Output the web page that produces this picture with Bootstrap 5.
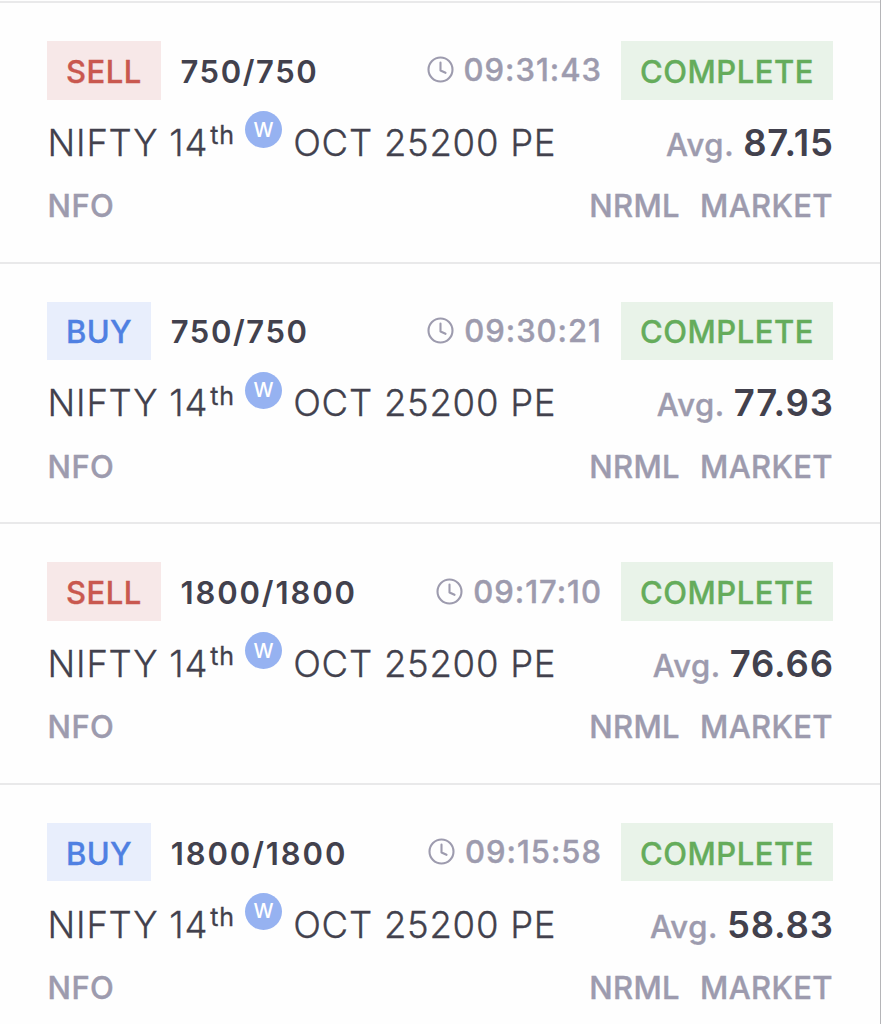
<!DOCTYPE html>
<html lang="en">
<head>
<meta charset="utf-8">
<meta name="viewport" content="width=device-width, initial-scale=1">
<title>Orders</title>
<link href="https://cdn.jsdelivr.net/npm/bootstrap@5.3.0/dist/css/bootstrap.min.css" rel="stylesheet">
<style>
body{font-family:Inter,"Liberation Sans",sans-serif;color:#42414d;background:#fefefe;font-size:31px;line-height:1;overflow:hidden}
.orders{height:1024px;padding-top:1px;border-right:1px solid #b5b5b8;overflow:hidden}
.order{height:260.67px;border-top:2px solid #e9e9ea;padding:38px 47px 0}
.line-top{height:58.5px}
.line-name{height:50px;margin-top:18.5px}
.line-meta{height:40px;margin-top:17.5px;padding-left:.6px;letter-spacing:.35px}
.tag{height:58.5px;padding:2px 19px 0;font-weight:500;-webkit-text-stroke:.35px currentColor}
.tag-sell{background:#f7e8e8;color:#c9584f;letter-spacing:.5px}
.tag-buy{background:#e8eefc;color:#4f80e2;letter-spacing:.4px}
.tag-done{background:#e9f3e9;color:#65ac5b;letter-spacing:.52px}
.qty{font-weight:600;letter-spacing:1.6px;margin-left:19.6px;padding-top:2px}
.qty-long{letter-spacing:1.9px}
.muted{color:#9d9bae;font-weight:500;-webkit-text-stroke:.4px currentColor}
.time{margin-right:19px;letter-spacing:1px;margin-top:-1px}
.time svg{width:27px;height:27px;margin-right:10px}
.sym{font-size:36.5px;font-weight:300;letter-spacing:.75px;white-space:pre;-webkit-text-stroke:.3px currentColor}
.sym:first-child{margin-left:.6px}
.ord{font-size:25px;font-weight:400;letter-spacing:1px;margin:-15px 0 0 2px;-webkit-text-stroke:.3px currentColor}
.week{width:37px;height:37px;background:#96b2f1;color:#fff;font-size:20px;font-weight:500;margin:-27px 11px 0 10px}
.avg{letter-spacing:.6px}
.price{font-size:36.5px;font-weight:600;margin:0 -.8px 0 9px;letter-spacing:.8px;color:#42414d;-webkit-text-stroke:0}
.kind{margin-left:20px;letter-spacing:.4px}
</style>
</head>
<body>
<main class="orders">
<section class="order">
<div class="line-top d-flex align-items-center"><span class="tag tag-sell d-flex align-items-center">SELL</span><span class="qty">750/750</span><span class="time muted d-flex align-items-center ms-auto"><svg viewBox="0 0 27 27" fill="none" stroke="currentColor" stroke-width="2.1"><circle cx="13.5" cy="13.5" r="12"/><path d="M13.5 6.5v8l5 2.3" stroke-linecap="round" stroke-linejoin="round"/></svg>09:31:43</span><span class="tag tag-done d-flex align-items-center">COMPLETE</span></div>
<div class="line-name d-flex align-items-center"><span class="sym">NIFTY 14</span><span class="ord">th</span><span class="week rounded-circle d-flex align-items-center justify-content-center">W</span><span class="sym">OCT 25200 PE</span><span class="avg ms-auto d-flex align-items-baseline muted">Avg.<b class="price">87.15</b></span></div>
<div class="line-meta d-flex align-items-center muted"><span>NFO</span><span class="ms-auto">NRML</span><span class="kind">MARKET</span></div>
</section>
<section class="order">
<div class="line-top d-flex align-items-center"><span class="tag tag-buy d-flex align-items-center">BUY</span><span class="qty">750/750</span><span class="time muted d-flex align-items-center ms-auto"><svg viewBox="0 0 27 27" fill="none" stroke="currentColor" stroke-width="2.1"><circle cx="13.5" cy="13.5" r="12"/><path d="M13.5 6.5v8l5 2.3" stroke-linecap="round" stroke-linejoin="round"/></svg>09:30:21</span><span class="tag tag-done d-flex align-items-center">COMPLETE</span></div>
<div class="line-name d-flex align-items-center"><span class="sym">NIFTY 14</span><span class="ord">th</span><span class="week rounded-circle d-flex align-items-center justify-content-center">W</span><span class="sym">OCT 25200 PE</span><span class="avg ms-auto d-flex align-items-baseline muted">Avg.<b class="price">77.93</b></span></div>
<div class="line-meta d-flex align-items-center muted"><span>NFO</span><span class="ms-auto">NRML</span><span class="kind">MARKET</span></div>
</section>
<section class="order">
<div class="line-top d-flex align-items-center"><span class="tag tag-sell d-flex align-items-center">SELL</span><span class="qty qty-long">1800/1800</span><span class="time muted d-flex align-items-center ms-auto"><svg viewBox="0 0 27 27" fill="none" stroke="currentColor" stroke-width="2.1"><circle cx="13.5" cy="13.5" r="12"/><path d="M13.5 6.5v8l5 2.3" stroke-linecap="round" stroke-linejoin="round"/></svg>09:17:10</span><span class="tag tag-done d-flex align-items-center">COMPLETE</span></div>
<div class="line-name d-flex align-items-center"><span class="sym">NIFTY 14</span><span class="ord">th</span><span class="week rounded-circle d-flex align-items-center justify-content-center">W</span><span class="sym">OCT 25200 PE</span><span class="avg ms-auto d-flex align-items-baseline muted">Avg.<b class="price">76.66</b></span></div>
<div class="line-meta d-flex align-items-center muted"><span>NFO</span><span class="ms-auto">NRML</span><span class="kind">MARKET</span></div>
</section>
<section class="order">
<div class="line-top d-flex align-items-center"><span class="tag tag-buy d-flex align-items-center">BUY</span><span class="qty qty-long">1800/1800</span><span class="time muted d-flex align-items-center ms-auto"><svg viewBox="0 0 27 27" fill="none" stroke="currentColor" stroke-width="2.1"><circle cx="13.5" cy="13.5" r="12"/><path d="M13.5 6.5v8l5 2.3" stroke-linecap="round" stroke-linejoin="round"/></svg>09:15:58</span><span class="tag tag-done d-flex align-items-center">COMPLETE</span></div>
<div class="line-name d-flex align-items-center"><span class="sym">NIFTY 14</span><span class="ord">th</span><span class="week rounded-circle d-flex align-items-center justify-content-center">W</span><span class="sym">OCT 25200 PE</span><span class="avg ms-auto d-flex align-items-baseline muted">Avg.<b class="price">58.83</b></span></div>
<div class="line-meta d-flex align-items-center muted"><span>NFO</span><span class="ms-auto">NRML</span><span class="kind">MARKET</span></div>
</section>
</main>
<script src="https://cdn.jsdelivr.net/npm/bootstrap@5.3.0/dist/js/bootstrap.bundle.min.js"></script>
</body>
</html>
